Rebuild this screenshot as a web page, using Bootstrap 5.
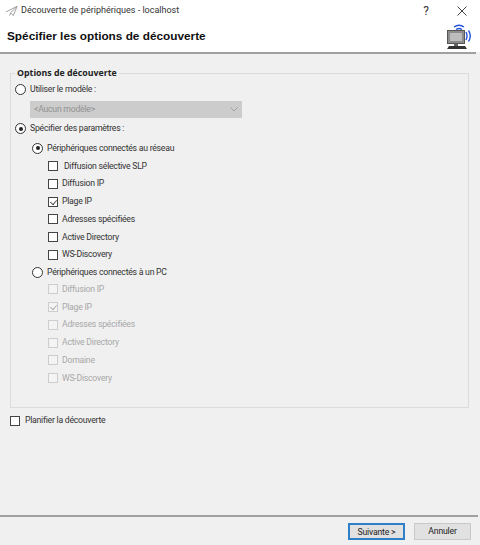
<!DOCTYPE html>
<html lang="fr">
  <head>
    <title>Découverte de périphériques</title>
    <link href="https://cdn.jsdelivr.net/npm/bootstrap@5.3.2/dist/css/bootstrap.min.css" rel="stylesheet">
    <style>
      body { background: #f0f0f0; font-family: Roboto, "Open Sans", sans-serif; font-size: 8.7px; letter-spacing: -.25px; color: #333; height: 545px; overflow: hidden; }
      .dlg-title { height: 21px; padding-left: 5px; background: #fff; font-size: 9px; letter-spacing: 0; }
      .dlg-title-text { margin-left: 3px; }
      .dlg-win-btn { width: 36px; font-size: 12px; color: #333; }
      .dlg-head { height: 31px; background: #fff; padding: 0 8px 0 7px; }
      .dlg-head h1 { font-family: "Liberation Sans", sans-serif; font-size: 11.8px; font-weight: 700; letter-spacing: 0; margin: 0; color: #111; }
      .dlg-rule { height: 2px; background: #a0a0a0; }
      .dlg-group { position: relative; margin: 19px 11px 0 10px; height: 335px; padding: 7px 5px 0 4px; border: 1px solid #dcdcdc; }
      .dlg-legend { position: absolute; top: -7px; left: 4px; padding: 0 2px; background: #f0f0f0; font-family: "Open Sans", sans-serif; font-weight: 700; font-size: 8.8px; letter-spacing: 0; line-height: 13px; color: #222; }
      .dlg-row { height: 17.75px; gap: 4px; }
      .dlg-lvl2 { margin-left: 17px; margin-top: 2px; }
      .dlg-lvl2b { margin-left: 17px; }
      .dlg-lvl3 { margin-left: 33px; }
      .dlg-box { width: 10px; height: 10px; margin: 0; border: 1px solid #444; border-radius: 0; background: #fff; appearance: none; flex: none; position: relative; }
      .dlg-box:checked::after { content: ""; position: absolute; left: 1.5px; top: 0; width: 5px; height: 7px; border: solid #444; border-width: 0 1px 1px 0; transform: rotate(40deg) scale(.85); }
      .dlg-radio { width: 11px; height: 11px; margin: 0; border: 1px solid #333; border-radius: 50%; background: #fff; appearance: none; flex: none; position: relative; }
      .dlg-radio:checked::after { content: ""; position: absolute; left: 2.5px; top: 2.5px; width: 4px; height: 4px; border-radius: 50%; background: #222; }
      .dlg-off { margin-top: -1px; color: #a8a8a8; }
      .dlg-off .dlg-box { border-color: #cdcdcd; background: #f4f4f4; opacity: 1; }
      .dlg-off .dlg-box:checked::after { border-color: #aaa; }
      .dlg-select { height: 17px; width: 212px; margin: 2px 0 2px 15px; padding: 0 4px; background: #ccc; color: #929292; line-height: 17px; }
      .dlg-plan { margin: 4px 0 0 10px; gap: 5px; }
      .dlg-foot { position: absolute; left: 0; right: 2px; top: 515px; height: 30px; border-top: 2px solid #a0a0a0; padding: 6px 7px 0 0; gap: 9px; }
      .dlg-btn { width: 57px; height: 17px; padding: 0; border: 1px solid #c8c8c8; border-radius: 0; background: #e1e1e1; color: #222; font-size: 8.7px; letter-spacing: -.2px; line-height: 13px; }
      .dlg-btn-main { border: 2px solid #2f7fc8; line-height: 12px; }
    </style>
  </head>
  <body>
    <div class="dlg-title d-flex align-items-center">
      <svg width="13" height="12" viewBox="0 0 14 12" fill="none" stroke="#9a9a9a" stroke-width="1"><path d="M1 7 13 1 9 11 6 8 13 1M6 8 5 11"/></svg>
      <span class="dlg-title-text flex-grow-1">Découverte de périphériques - localhost</span>
      <span class="dlg-win-btn text-center">?</span>
      <span class="dlg-win-btn text-center"><svg width="10" height="10" viewBox="0 0 10 10" stroke="#444" stroke-width="1"><path d="M.5.500 9.500 9.500M9.500.500.500 9.500"/></svg></span>
    </div>
    <div class="dlg-head d-flex align-items-center justify-content-between">
      <h1>Spécifier les options de découverte</h1>
      <svg width="25" height="26" viewBox="0 0 25 26">
        <path d="M7 3Q12-.5 17 3M9 5.500Q12 3.500 15 5.500M19 8Q21 12 19 16M21.500 6.500Q25 12 21.500 17.500" fill="none" stroke="#2253d8" stroke-width="1.400"/>
        <rect x=".5" y="6.500" width="17" height="13" fill="#8c8c8c" stroke="#555"/>
        <rect x="3" y="9" width="12" height="8" fill="#bcbcbc"/>
        <rect x="7" y="20" width="4" height="2" fill="#666"/>
        <path d="M2 22H18L20 25H0Z" fill="#333"/>
      </svg>
    </div>
    <div class="dlg-rule me-1"></div>

    <div class="dlg-group">
      <div class="dlg-legend">Options de découverte</div>
      <label class="dlg-row d-flex align-items-center"><input class="dlg-radio" type="radio" name="m"> Utiliser le modèle :</label>
      <div class="dlg-select d-flex align-items-center justify-content-between">
        <span>&lt;Aucun modèle&gt;</span>
        <svg width="8" height="5" viewBox="0 0 8 5" fill="none" stroke="#a0a0a0"><path d="M.5.500 4 4 7.500.500"/></svg>
      </div>
      <label class="dlg-row d-flex align-items-center"><input class="dlg-radio" type="radio" name="m" checked> Spécifier des paramètres :</label>

      <label class="dlg-row dlg-lvl2 d-flex align-items-center"><input class="dlg-radio" type="radio" name="c" checked> Périphériques connectés au réseau</label>
      <label class="dlg-row dlg-lvl3 d-flex align-items-center"><input class="dlg-box" type="checkbox"> &nbsp;Diffusion sélective SLP</label>
      <label class="dlg-row dlg-lvl3 d-flex align-items-center"><input class="dlg-box" type="checkbox"> Diffusion IP</label>
      <label class="dlg-row dlg-lvl3 d-flex align-items-center"><input class="dlg-box" type="checkbox" checked> Plage IP</label>
      <label class="dlg-row dlg-lvl3 d-flex align-items-center"><input class="dlg-box" type="checkbox"> Adresses spécifiées</label>
      <label class="dlg-row dlg-lvl3 d-flex align-items-center"><input class="dlg-box" type="checkbox"> Active Directory</label>
      <label class="dlg-row dlg-lvl3 d-flex align-items-center"><input class="dlg-box" type="checkbox"> WS-Discovery</label>

      <label class="dlg-row dlg-lvl2b d-flex align-items-center"><input class="dlg-radio" type="radio" name="c"> Périphériques connectés à un PC</label>
      <div class="dlg-off">
        <label class="dlg-row dlg-lvl3 d-flex align-items-center"><input class="dlg-box" type="checkbox" disabled> Diffusion IP</label>
        <label class="dlg-row dlg-lvl3 d-flex align-items-center"><input class="dlg-box" type="checkbox" checked disabled> Plage IP</label>
        <label class="dlg-row dlg-lvl3 d-flex align-items-center"><input class="dlg-box" type="checkbox" disabled> Adresses spécifiées</label>
        <label class="dlg-row dlg-lvl3 d-flex align-items-center"><input class="dlg-box" type="checkbox" disabled> Active Directory</label>
        <label class="dlg-row dlg-lvl3 d-flex align-items-center"><input class="dlg-box" type="checkbox" disabled> Domaine</label>
        <label class="dlg-row dlg-lvl3 d-flex align-items-center"><input class="dlg-box" type="checkbox" disabled> WS-Discovery</label>
      </div>
    </div>

    <label class="dlg-row dlg-plan d-flex align-items-center"><input class="dlg-box" type="checkbox"> Planifier la découverte</label>

    <div class="dlg-foot d-flex justify-content-end align-items-start">
      <button class="btn dlg-btn dlg-btn-main" type="button">Suivante &gt;</button>
      <button class="btn dlg-btn" type="button">Annuler</button>
    </div>
    <script src="https://cdn.jsdelivr.net/npm/bootstrap@5.3.2/dist/js/bootstrap.bundle.min.js"></script>
  </body>
</html>
